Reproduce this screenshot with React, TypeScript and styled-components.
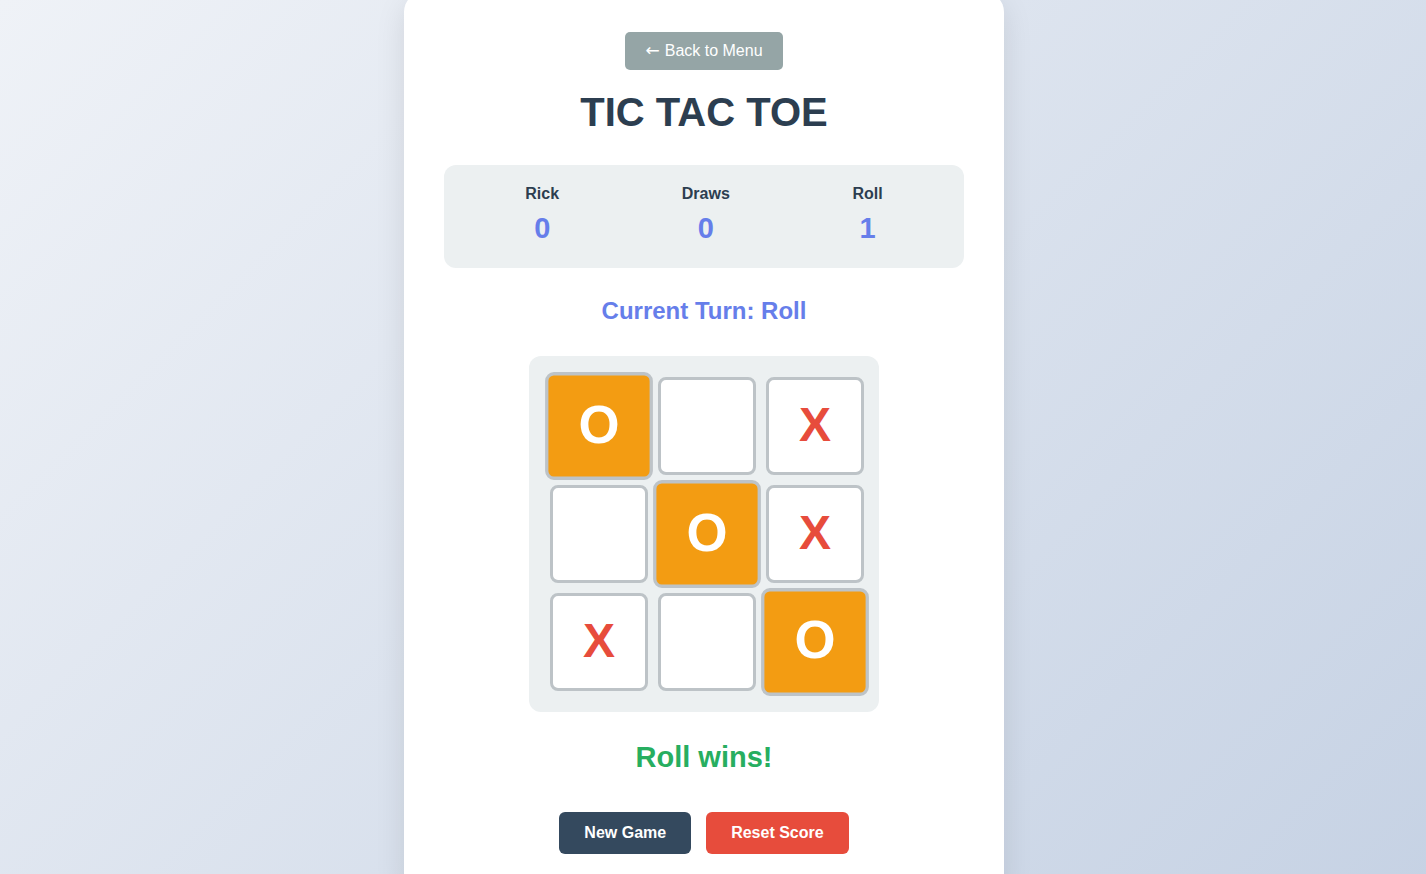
import React from "react";
import styled, { createGlobalStyle } from "styled-components";

const GlobalStyle = createGlobalStyle`
  html, body {
    margin: 0;
    padding: 0;
  }
  body {
    min-height: 100vh;
    background: linear-gradient(135deg, #eff2f7 0%, #c6d2e4 100%);
    font-family: "Liberation Sans", Arial, Helvetica, sans-serif;
    overflow: hidden;
  }
`;

const Page = styled.div`
  display: flex;
  justify-content: center;
  align-items: flex-start;
  min-height: 100vh;
  padding-right: 18px;
`;

const Card = styled.main`
  width: 600px;
  box-sizing: border-box;
  margin-top: -8px;
  padding: 40px 40px 40px;
  background: #ffffff;
  border-radius: 20px;
  box-shadow: 0 10px 30px rgba(0, 0, 0, 0.1);
  display: flex;
  flex-direction: column;
  align-items: center;
  text-align: center;
`;

const BackButton = styled.button`
  box-sizing: border-box;
  height: 38px;
  font-family: inherit;
  font-size: 16px;
  line-height: 18px;
  color: #ffffff;
  background: #95a5a6;
  border: none;
  border-radius: 5px;
  padding: 0 20px;
  margin-bottom: 19px;
  cursor: pointer;
`;

const Arrow = styled.span`
  font-family: "DejaVu Sans", sans-serif;
  font-size: 17px;
  line-height: 0;
  margin-right: 5px;
`;

const Title = styled.h1`
  margin: 0 0 30px;
  font-size: 40px;
  line-height: 46px;
  font-weight: 700;
  color: #2c3e50;
`;

const ScoreBoard = styled.section`
  width: 100%;
  box-sizing: border-box;
  display: flex;
  justify-content: space-around;
  padding: 20px 20px 23px;
  background: #ecf0f1;
  border-radius: 12px;
  margin-bottom: 29px;
`;

const ScoreItem = styled.div`
  display: flex;
  flex-direction: column;
  align-items: center;
`;

const ScoreLabel = styled.div`
  font-size: 16px;
  line-height: 18px;
  font-weight: 700;
  color: #2c3e50;
  margin-bottom: 8px;
`;

const ScoreValue = styled.div`
  font-size: 29px;
  line-height: 34px;
  font-weight: 700;
  color: #667eea;
`;

const Turn = styled.div`
  font-size: 24px;
  line-height: 28px;
  font-weight: 700;
  color: #667eea;
  margin-bottom: 31px;
`;

const Board = styled.div`
  display: grid;
  grid-template-columns: repeat(3, 98px);
  grid-auto-rows: 98px;
  gap: 10px;
  padding: 21px 15px 21px 21px;
  background: #ecf0f1;
  border-radius: 12px;
`;

const Cell = styled.button<{ $win?: boolean; $mark?: string }>`
  box-sizing: border-box;
  width: 98px;
  height: 98px;
  padding: 0 0 3px;
  border: 3px solid #bdc3c7;
  border-radius: 8px;
  background: ${(p) => (p.$win ? "#f39c12" : "#ffffff")};
  color: ${(p) => (p.$win ? "#ffffff" : p.$mark === "X" ? "#e74c3c" : "#3498db")};
  font-family: inherit;
  font-size: 48px;
  line-height: 1;
  font-weight: 700;
  display: flex;
  align-items: center;
  justify-content: center;
  transform: ${(p) => (p.$win ? "scale(1.1)" : "none")};
  cursor: pointer;
`;

const Status = styled.div`
  margin-top: 28px;
  margin-bottom: 38px;
  font-size: 29px;
  line-height: 34px;
  font-weight: 700;
  color: #27ae60;
`;

const Actions = styled.div`
  display: flex;
  gap: 15px;
  justify-content: center;
`;

const ActionButton = styled.button<{ $variant: "dark" | "danger" }>`
  font-family: inherit;
  font-size: 16px;
  line-height: 18px;
  font-weight: 700;
  color: #ffffff;
  background: ${(p) => (p.$variant === "dark" ? "#34495e" : "#e74c3c")};
  border: none;
  border-radius: 6px;
  padding: 12px 25px;
  cursor: pointer;
`;

const board = ["O", "", "X", "", "O", "X", "X", "", "O"];
const winLine = [0, 4, 8];

const scores = [
  { label: "Rick", value: 0 },
  { label: "Draws", value: 0 },
  { label: "Roll", value: 1 },
];

export default function App() {
  return (
    <>
      <GlobalStyle />
      <Page>
        <Card>
          <BackButton>
            <Arrow>←</Arrow>Back to Menu
          </BackButton>
          <Title>TIC TAC TOE</Title>
          <ScoreBoard>
            {scores.map((s) => (
              <ScoreItem key={s.label}>
                <ScoreLabel>{s.label}</ScoreLabel>
                <ScoreValue>{s.value}</ScoreValue>
              </ScoreItem>
            ))}
          </ScoreBoard>
          <Turn>Current Turn: Roll</Turn>
          <Board>
            {board.map((m, i) => (
              <Cell key={i} $mark={m} $win={winLine.includes(i)}>
                {m}
              </Cell>
            ))}
          </Board>
          <Status>Roll wins!</Status>
          <Actions>
            <ActionButton $variant="dark">New Game</ActionButton>
            <ActionButton $variant="danger">Reset Score</ActionButton>
          </Actions>
        </Card>
      </Page>
    </>
  );
}
